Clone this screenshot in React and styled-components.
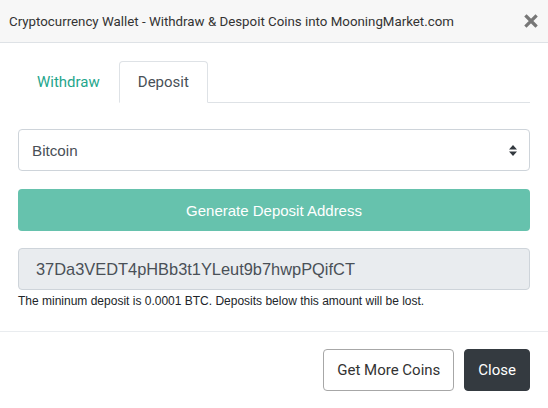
import React from 'react';
import styled, { createGlobalStyle } from 'styled-components';

const GlobalStyle = createGlobalStyle`
  body {
    margin: 0;
    background: #fff;
    font-family: Roboto, "Liberation Sans", sans-serif;
    color: #212529;
  }
`;

const Modal = styled.div`
  width: 548px;
  height: 408px;
  display: flex;
  flex-direction: column;
  background: #fff;
  overflow: hidden;
`;

const Header = styled.div`
  height: 44px;
  box-sizing: border-box;
  background: #f7f7f7;
  border-bottom: 1px solid #dee2e6;
  display: flex;
  align-items: center;
  justify-content: space-between;
  padding: 0 10px 0 9px;
`;

const Title = styled.h5`
  margin: 0;
  font-size: 13.3px;
  font-weight: 400;
  color: #333;
`;

const CloseX = styled.button`
  border: 0;
  background: none;
  padding: 0;
  width: 14px;
  height: 14px;
  display: flex;
  cursor: pointer;
`;

const Body = styled.div`
  padding: 18px 18px 0;
  display: flex;
  flex-direction: column;
`;

const Tabs = styled.div`
  display: flex;
  border-bottom: 1px solid #dee2e6;
  height: 41px;
`;

const Tab = styled.div`
  box-sizing: border-box;
  height: 42px;
  padding: 0 18px;
  display: flex;
  align-items: center;
  font-size: 15px;
  color: ${(p) => (p.$active ? '#495057' : '#1fa68c')};
  background: #fff;
  border: 1px solid ${(p) => (p.$active ? '#dee2e6' : 'transparent')};
  border-bottom-color: ${(p) => (p.$active ? '#fff' : 'transparent')};
  border-radius: 4px 4px 0 0;
`;

const Select = styled.div`
  margin-top: 26px;
  height: 42px;
  box-sizing: border-box;
  border: 1px solid #ced4da;
  border-radius: 4px;
  display: flex;
  align-items: center;
  justify-content: space-between;
  padding: 0 12px 0 13px;
  font-family: "Liberation Sans", Arial, sans-serif;
  font-size: 15.2px;
  color: #495057;
`;

const Primary = styled.button`
  margin-top: 18px;
  height: 42px;
  border: 0;
  border-radius: 4px;
  background: #66c2ad;
  color: #fff;
  font-family: "Liberation Sans", Arial, sans-serif;
  font-size: 15px;
  cursor: pointer;
`;

const Address = styled.div`
  margin-top: 17px;
  height: 42px;
  box-sizing: border-box;
  border: 1px solid #ced4da;
  border-radius: 4px;
  background: #e9ecef;
  display: flex;
  align-items: center;
  padding: 0 17px;
  font-family: "Liberation Sans", Arial, sans-serif;
  font-size: 16.4px;
  color: #495057;
`;

const Help = styled.div`
  margin-top: 4px;
  font-family: "Liberation Sans", Arial, sans-serif;
  font-size: 12px;
  color: #212529;
`;

const Footer = styled.div`
  margin-top: 23px;
  border-top: 1px solid #e9ecef;
  padding: 17px 18px;
  display: flex;
  justify-content: flex-end;
  gap: 10px;
`;

const Button = styled.button`
  height: 42px;
  box-sizing: border-box;
  padding: 0 13px;
  border-radius: 4px;
  font-family: Roboto, sans-serif;
  font-size: 15px;
  cursor: pointer;
  border: 1px solid ${(p) => (p.$dark ? '#343a40' : '#a7a7a7')};
  background: ${(p) => (p.$dark ? '#343a40' : '#fff')};
  color: ${(p) => (p.$dark ? '#fff' : '#333')};
`;

export default function App() {
  return (
    <>
      <GlobalStyle />
      <Modal>
        <Header>
          <Title>Cryptocurrency Wallet - Withdraw &amp; Despoit Coins into MooningMarket.com</Title>
          <CloseX aria-label="close">
            <svg width="14" height="14" viewBox="0 0 14 14">
              <path d="M2.5 2.5L11.5 11.5M11.5 2.5L2.5 11.5" stroke="#777" strokeWidth="3.2" strokeLinecap="square" />
            </svg>
          </CloseX>
        </Header>
        <Body>
          <Tabs>
            <Tab>Withdraw</Tab>
            <Tab $active>Deposit</Tab>
          </Tabs>
          <Select>
            Bitcoin
            <svg width="8" height="13" viewBox="0 0 8 13">
              <path d="M4 1L8 5.5H0Z M4 12L8 7.5H0Z" fill="#343a40" />
            </svg>
          </Select>
          <Primary>Generate Deposit Address</Primary>
          <Address>37Da3VEDT4pHBb3t1YLeut9b7hwpPQifCT</Address>
          <Help>The mininum deposit is 0.0001 BTC. Deposits below this amount will be lost.</Help>
        </Body>
        <Footer>
          <Button>Get More Coins</Button>
          <Button $dark>Close</Button>
        </Footer>
      </Modal>
    </>
  );
}
